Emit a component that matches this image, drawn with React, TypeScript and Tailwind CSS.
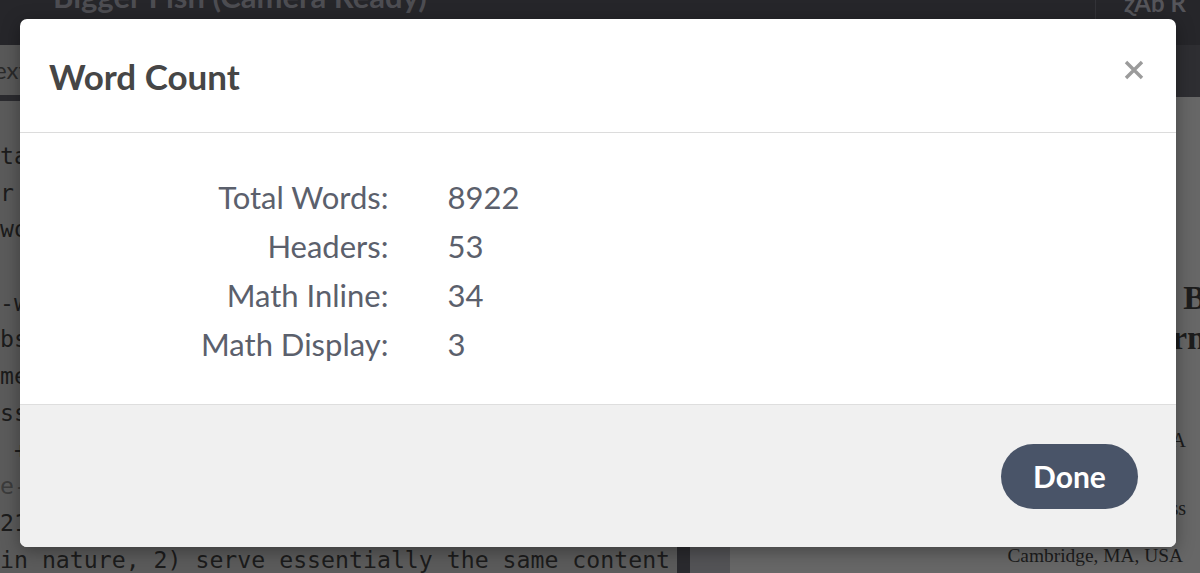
const editorLines = [
  { text: "tables and figures are placed at the end", tone: "text-[#1c1c1c]" },
  { text: "r the two implementations that we compare", tone: "text-[#1c1c1c]" },
  { text: "would otherwise interfere with each other", tone: "text-[#1c1c1c]" },
  { text: "", tone: "text-[#1c1c1c]" },
  { text: "-website fingerprinting attack, where an", tone: "text-[#1c1c1c]" },
  { text: "bserves the timing of the victim browser", tone: "text-[#1c1c1c]" },
  { text: "measures how long each loop iteration", tone: "text-[#1c1c1c]" },
  { text: "ssumes that the two processes share a", tone: "text-[#1c1c1c]" },
  { text: " +   \\cite{shusterman2019robust}", tone: "text-[#1c1c1c]" },
  { text: "e-related work on cache attacks", tone: "text-[#3c3c3c]" },
  { text: "21 websites that are 1) dynamic and highly", tone: "text-[#1c1c1c]" },
  { text: "in nature, 2) serve essentially the same content", tone: "text-[#1c1c1c]" },
];

const stats = [
  { label: "Total Words:", value: "8922" },
  { label: "Headers:", value: "53" },
  { label: "Math Inline:", value: "34" },
  { label: "Math Display:", value: "3" },
];

function Background() {
  return (
    <div className="flex h-full w-full flex-col">
      <div className="flex h-[45px] shrink-0 items-start bg-[#26262a]">
        <div className="-mt-[19px] pl-[53px] font-['Lato',sans-serif] text-[31px] font-bold leading-none text-[#4d4d52]">
          Bigger Fish (Camera Ready)
        </div>
        <div className="ml-auto flex h-full w-[105px] items-start border-l border-[#333338] pl-[28px]">
          <span className="-mt-[9px] font-['Lato',sans-serif] text-[24px] font-bold leading-none text-[#55555a]">
            ɀAb R
          </span>
        </div>
      </div>

      <div className="flex min-h-0 flex-1">
        <div className="flex w-[677px] flex-col bg-[#5b5b5b]">
          <div className="flex h-[50px] shrink-0 items-center bg-[#595959]">
            <span className="-ml-[6px] font-['Lato',sans-serif] text-[24px] text-[#2a2a2a]">
              ext
            </span>
          </div>
          <div className="h-[6px] shrink-0 bg-[#2b2b2f]" />
          <div className="flex flex-col pt-[37px] font-['DejaVu_Sans_Mono',monospace] text-[23.2px] leading-[36.7px]">
            {editorLines.map((line, i) => (
              <div key={i} className={`h-[36.7px] whitespace-pre ${line.tone}`}>
                {line.text}
              </div>
            ))}
          </div>
        </div>
        <div className="w-[13px] bg-[#2a2a2e]" />
        <div className="w-[40px] bg-[#535356]" />
        <div className="flex flex-1 flex-col">
          <div className="h-[52px] shrink-0 bg-[#2e2e32]" />
          <div className="flex flex-1 flex-col items-end bg-[#676767] pt-[181px] font-['Liberation_Serif',serif] text-[#1c1c1c]">
            <div className="mr-[-6px] text-[34px] font-bold leading-[40px]">
              Bigger Fish: B
            </div>
            <div className="mr-[-6px] text-[34px] font-bold leading-[40px]">
              Learn
            </div>
            <div className="mt-[70px] mr-[14px] text-[20px] leading-[24px]">
              USA
            </div>
            <div className="mt-[44px] mr-[14px] text-[20px] leading-[24px]">
              Chess
            </div>
            <div className="mt-[24px] mr-[17px] text-[19.4px] leading-[24px]">
              Cambridge, MA, USA
            </div>
          </div>
        </div>
      </div>
    </div>
  );
}

function CloseIcon() {
  return (
    <svg width="22" height="22" viewBox="0 0 22 22" fill="none">
      <path
        d="M3 3L19 19M19 3L3 19"
        stroke="#9b9b9b"
        strokeWidth="3.4"
        strokeLinecap="butt"
      />
    </svg>
  );
}

export default function App() {
  return (
    <div className="relative h-[573px] w-[1200px] overflow-hidden">
      <Background />

      <div className="absolute left-[20px] top-[19px] flex h-[528px] w-[1156px] flex-col overflow-hidden rounded-[7px] bg-white font-['Lato',sans-serif] shadow-[0_4px_18px_rgba(0,0,0,0.35)]">
        <div className="flex h-[114px] shrink-0 items-center justify-between border-b border-[#dcdcdc] pl-[29px] pr-[31px]">
          <h2 className="mt-[2px] text-[35px] font-bold leading-none text-[#464646]">
            Word Count
          </h2>
          <button type="button" className="mb-[12px] flex items-center justify-center">
            <CloseIcon />
          </button>
        </div>

        <div className="flex flex-1 flex-col border-b border-[#dedede] pl-[181px] pt-[40px]">
          <div className="grid grid-cols-[auto_auto] justify-start gap-x-[59px] text-[31px] leading-[49px] text-[#5b606c]">
            {stats.map((row) => (
              <div key={row.label} className="contents">
                <div className="text-right">{row.label}</div>
                <div>{row.value}</div>
              </div>
            ))}
          </div>
        </div>

        <div className="flex h-[142px] shrink-0 items-center justify-end bg-[#f0f0f0] pr-[38px]">
          <button
            type="button"
            className="flex h-[65px] w-[137px] items-center justify-center rounded-full bg-[#495468] text-[30px] font-bold text-white"
          >
            Done
          </button>
        </div>
      </div>
    </div>
  );
}
